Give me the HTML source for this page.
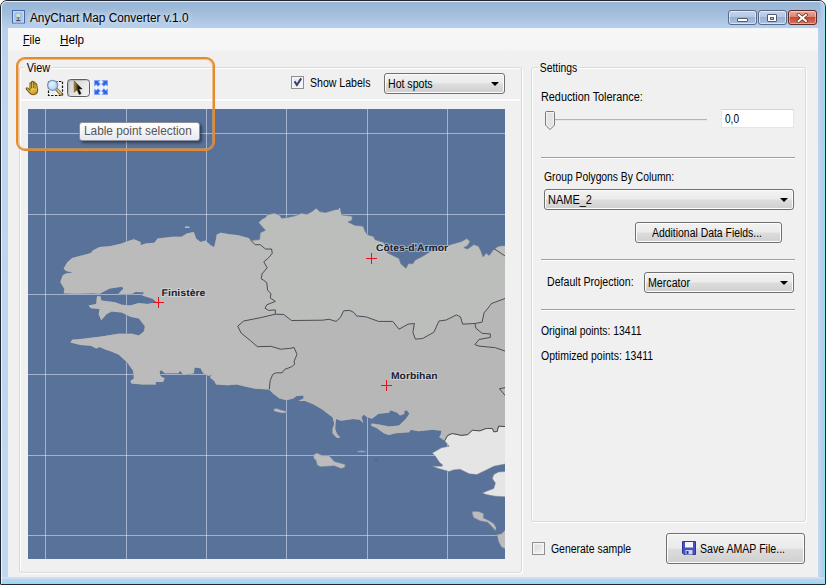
<!DOCTYPE html>
<html><head><meta charset="utf-8">
<style>
html,body{margin:0;padding:0;}
body{width:826px;height:585px;position:relative;overflow:hidden;background:#fff;font-family:"Liberation Sans",sans-serif;font-size:12px;color:#000;}
.abs{position:absolute;}
.t{position:absolute;white-space:nowrap;line-height:14px;height:14px;}
#win{position:absolute;left:0;top:0;width:824px;height:583px;border:1px solid #23262c;border-radius:7px 7px 1px 1px;
 background:linear-gradient(to top,#8edff4 0px,#9bdcf2 2px,#bccfee 3px,#c1d1ef 5px,#d4ecf6 6px,rgba(200,220,245,0) 7px) no-repeat,
 linear-gradient(to left,#93dff2 0px,#a9d3ee 1px,#b6cbe8 2px,rgba(182,203,232,0) 6px) no-repeat,
 linear-gradient(#97b4d4 0px,#a1bddc 12px,#b8d0eb 27px,#bdd4ef 60px,#c2d8f1 100%);}
#win:before{content:"";position:absolute;left:0;top:0;right:0;bottom:0;border:1px solid rgba(255,255,255,.75);border-right-color:rgba(150,225,245,.9);border-bottom-color:transparent;border-radius:6px 6px 1px 1px;}
#client{position:absolute;left:8px;top:28px;width:810px;height:549px;background:#f0f0f0;}
#menubar{position:absolute;left:0;top:0;width:810px;height:24px;background:linear-gradient(#eef6fd 0px,#faf9f7 2px,#f6f6f6 5px,#f6f6f6 20px,#f1f1f1 24px);}
.gb{position:absolute;border:1px solid #dbdbdb;border-radius:3px;box-shadow:inset 1px 1px 0 #fff,1px 1px 0 #fff;}
.gbl{position:absolute;background:#f0f0f0;padding:0 2px;line-height:14px;}
.sep{position:absolute;height:1px;background:#a0a0a0;border-bottom:1px solid #fff;}
.combo{position:absolute;border:1px solid #707070;border-radius:3px;background:linear-gradient(#f2f2f2 0%,#ebebeb 48%,#dddddd 52%,#cfcfcf 100%);box-shadow:inset 0 0 0 1px #fcfcfc;}
.combo .arr{position:absolute;right:5px;top:8px;width:0;height:0;border-left:4px solid transparent;border-right:4px solid transparent;border-top:4px solid #000;}
.btn{position:absolute;border:1px solid #707070;border-radius:3px;background:linear-gradient(#f2f2f2 0%,#ebebeb 48%,#dddddd 52%,#cfcfcf 100%);box-shadow:inset 0 0 0 1px #fcfcfc;}
.chk{position:absolute;width:11px;height:11px;border:1px solid #8e8f8f;background:linear-gradient(135deg,#d5d5d5,#f6f6f6);box-shadow:inset 0 0 0 1.5px #f6f6f6;}

.cb{position:absolute;top:10px;height:13px;border:1px solid #5a6a86;border-radius:3px;background:linear-gradient(#c3d4ec 0%,#b4c8e4 45%,#98b2d6 50%,#aac2e2 100%);box-shadow:inset 0 0 0 1px rgba(255,255,255,.55);}
.cb.red{border-color:#5b2a2a;background:linear-gradient(#e9a99d 0%,#dd8472 45%,#c94a34 50%,#d9745a 100%);box-shadow:inset 0 0 0 1px rgba(255,255,255,.4);}
</style></head><body>
<div id="win">
 <!-- title -->
 <div class="t" id="title" style="text-shadow:0 0 5px rgba(255,255,255,.9),0 0 8px rgba(255,255,255,.6);margin-top:1px;left:29.2px;top:9px;font-size:12px;transform:scaleX(0.983);transform-origin:0 0;">AnyChart Map Converter v.1.0</div>
</div>
<div id="client">
 <div id="menubar"></div>
</div>
<!-- all following positioned in page coords -->
<div class="t" id="mFile" style="left:22.8px;top:33px;transform:scaleX(0.899);transform-origin:0 0;"><u>F</u>ile</div>
<div class="t" id="mHelp" style="left:59.7px;top:33px;transform:scaleX(0.972);transform-origin:0 0;"><u>H</u>elp</div>

<!-- View groupbox -->
<div class="gb" style="left:19px;top:67px;width:501px;height:504px;"></div>
<div class="gbl" id="gView" style="left:24.5px;top:61px;transform:scaleX(0.899);transform-origin:0 0;">View</div>
<div class="abs" style="left:20px;top:99px;width:500px;height:2px;background:#fcfcfc;"></div>

<!-- Settings groupbox -->
<div class="gb" style="left:531px;top:67px;width:273px;height:453px;"></div>
<div class="gbl" id="gSet" style="left:538.1px;top:61px;transform:scaleX(0.865);transform-origin:0 0;">Settings</div>

<!-- map -->
<div id="map" class="abs" style="left:28px;top:109px;width:477px;height:450px;background:#58729a;overflow:hidden;">
<svg id="mapsvg" width="477" height="450" viewBox="28 109 477 450" style="position:absolute;left:0;top:0;">
<path d="M45.5 109V559M126.5 109V559M206.5 109V559M286.5 109V559M367.5 109V559M447.5 109V559" stroke="#eef3ff" stroke-opacity=".5" stroke-width="1" fill="none" shape-rendering="crispEdges"/>
<path d="M28 133.5H505M28 214.5H505M28 294.5H505M28 374.5H505M28 455.5H505M28 535.5H505" stroke="#eef3ff" stroke-opacity=".5" stroke-width="1" fill="none" shape-rendering="crispEdges"/>
<clipPath id="lc"><path d="M60.3 282.0 L62.8 275.2 L66.0 273.5 L73.0 272.5 L66.0 271.0 L63.7 268.4 L67.1 262.4 L72.2 258.1 L91.0 253.0 L92.7 250.4 L99.6 247.0 L109.8 246.2 L121.8 243.6 L125.2 241.9 L133.8 239.3 L140.6 241.9 L140.6 245.3 L145.7 243.6 L154.3 242.7 L157.7 238.5 L173.0 236.8 L181.6 236.8 L186.8 233.6 L193.7 231.9 L196.2 238.7 L200.5 242.1 L205.6 240.4 L209.9 244.7 L214.2 247.3 L215.9 239.6 L216.8 234.4 L221.0 232.7 L227.9 234.1 L238.1 235.3 L248.4 237.9 L250.9 240.4 L259.5 239.6 L260.3 232.7 L265.5 230.2 L262.1 226.8 L258.6 222.5 L262.1 219.1 L265.5 217.4 L267.2 214.8 L274.0 213.1 L279.1 214.8 L281.7 218.2 L287.7 217.4 L296.2 215.6 L301.4 213.1 L306.8 214.2 L312.0 211.6 L316.2 208.2 L319.7 211.6 L325.6 212.5 L334.2 209.9 L340.2 209.1 L341.9 215.0 L352.1 216.2 L352.1 220.2 L347.9 221.9 L354.7 225.3 L363.2 226.2 L365.0 231.3 L367.5 234.7 L373.5 236.4 L375.2 239.8 L383.8 242.4 L387.2 252.6 L392.3 255.2 L399.1 258.6 L400.9 263.8 L406.0 268.3 L408.5 263.4 L412.8 263.8 L415.0 260.2 L423.1 256.0 L430.4 251.6 L440.0 250.5 L450.8 244.6 L461.5 241.5 L466.9 238.5 L470.0 241.5 L467.7 245.4 L463.8 247.7 L467.7 248.9 L473.8 244.6 L478.5 246.2 L480.8 250.8 L483.1 256.9 L486.2 253.1 L489.2 255.4 L493.8 249.2 L498.5 246.2 L506.0 245.4 L506.0 426.6 L498.5 426.2 L497.2 431.5 L493.8 431.8 L492.3 428.5 L486.2 428.5 L480.0 430.8 L472.3 430.3 L467.7 434.6 L461.5 435.4 L452.3 433.5 L447.7 435.4 L444.6 440.8 L439.2 436.9 L440.8 434.6 L441.5 430.8 L432.3 429.7 L418.5 431.2 L410.8 429.7 L409.2 432.3 L406.0 432.5 L395.7 433.3 L388.9 435.0 L383.8 433.3 L376.9 428.2 L370.9 425.6 L371.8 423.6 L380.3 424.8 L388.9 426.5 L399.1 425.6 L406.0 418.8 L409.4 413.7 L406.8 410.3 L404.3 411.1 L404.3 413.7 L400.0 415.4 L397.4 412.8 L390.6 410.3 L388.9 412.8 L378.6 413.7 L371.8 418.8 L366.7 417.1 L364.1 414.5 L361.5 417.1 L363.3 423.2 L359.9 419.8 L353.1 419.0 L341.1 420.7 L336.0 419.0 L335.1 428.4 L336.8 433.5 L340.3 437.8 L336.8 437.8 L332.6 433.5 L332.6 428.4 L334.3 424.1 L332.6 417.3 L329.1 414.7 L322.3 409.6 L313.8 404.4 L305.2 401.0 L298.4 401.0 L303.5 398.5 L303.5 395.4 L296.7 395.9 L293.2 398.5 L286.4 400.2 L279.6 398.5 L272.7 393.3 L269.3 389.4 L255.6 388.7 L247.1 387.0 L236.8 384.5 L228.0 385.3 L216.0 384.4 L214.3 381.0 L210.0 377.6 L211.7 374.2 L209.1 375.9 L203.2 373.3 L200.6 368.2 L194.6 367.4 L193.8 373.3 L183.5 375.0 L180.1 370.8 L178.4 373.3 L169.0 373.3 L164.7 373.3 L161.3 369.9 L159.6 371.6 L160.4 375.9 L164.7 378.5 L163.0 381.9 L155.3 381.9 L156.2 384.4 L142.5 384.4 L131.4 383.6 L130.5 381.0 L133.9 378.5 L133.1 370.8 L127.1 362.2 L118.5 354.5 L110.0 351.1 L106.4 350.0 L99.6 347.0 L96.2 348.4 L91.0 345.8 L80.8 345.0 L70.5 342.4 L72.2 339.8 L80.8 339.0 L101.3 336.4 L118.4 333.8 L132.0 333.8 L138.9 335.6 L144.0 331.3 L144.9 326.2 L138.9 318.5 L130.3 316.8 L121.8 312.5 L111.5 311.6 L106.4 314.2 L101.3 320.2 L98.7 314.2 L99.6 309.0 L91.0 308.2 L88.5 305.6 L96.2 303.9 L97.0 296.2 L100.4 296.2 L101.3 300.5 L115.0 302.2 L121.8 304.8 L130.3 305.6 L138.9 303.1 L147.4 303.9 L156.8 302.2 L152.6 298.8 L142.3 295.4 L144.0 292.3 L135.5 292.0 L130.3 294.5 L118.4 293.7 L123.5 288.5 L121.8 286.8 L109.8 288.5 L99.6 293.7 L92.7 293.2 L75.6 293.7 L63.7 293.2 L64.5 288.9Z"/></clipPath>
<path d="M60.3 282.0 L62.8 275.2 L66.0 273.5 L73.0 272.5 L66.0 271.0 L63.7 268.4 L67.1 262.4 L72.2 258.1 L91.0 253.0 L92.7 250.4 L99.6 247.0 L109.8 246.2 L121.8 243.6 L125.2 241.9 L133.8 239.3 L140.6 241.9 L140.6 245.3 L145.7 243.6 L154.3 242.7 L157.7 238.5 L173.0 236.8 L181.6 236.8 L186.8 233.6 L193.7 231.9 L196.2 238.7 L200.5 242.1 L205.6 240.4 L209.9 244.7 L214.2 247.3 L215.9 239.6 L216.8 234.4 L221.0 232.7 L227.9 234.1 L238.1 235.3 L248.4 237.9 L250.9 240.4 L259.5 239.6 L260.3 232.7 L265.5 230.2 L262.1 226.8 L258.6 222.5 L262.1 219.1 L265.5 217.4 L267.2 214.8 L274.0 213.1 L279.1 214.8 L281.7 218.2 L287.7 217.4 L296.2 215.6 L301.4 213.1 L306.8 214.2 L312.0 211.6 L316.2 208.2 L319.7 211.6 L325.6 212.5 L334.2 209.9 L340.2 209.1 L341.9 215.0 L352.1 216.2 L352.1 220.2 L347.9 221.9 L354.7 225.3 L363.2 226.2 L365.0 231.3 L367.5 234.7 L373.5 236.4 L375.2 239.8 L383.8 242.4 L387.2 252.6 L392.3 255.2 L399.1 258.6 L400.9 263.8 L406.0 268.3 L408.5 263.4 L412.8 263.8 L415.0 260.2 L423.1 256.0 L430.4 251.6 L440.0 250.5 L450.8 244.6 L461.5 241.5 L466.9 238.5 L470.0 241.5 L467.7 245.4 L463.8 247.7 L467.7 248.9 L473.8 244.6 L478.5 246.2 L480.8 250.8 L483.1 256.9 L486.2 253.1 L489.2 255.4 L493.8 249.2 L498.5 246.2 L506.0 245.4 L506.0 426.6 L498.5 426.2 L497.2 431.5 L493.8 431.8 L492.3 428.5 L486.2 428.5 L480.0 430.8 L472.3 430.3 L467.7 434.6 L461.5 435.4 L452.3 433.5 L447.7 435.4 L444.6 440.8 L439.2 436.9 L440.8 434.6 L441.5 430.8 L432.3 429.7 L418.5 431.2 L410.8 429.7 L409.2 432.3 L406.0 432.5 L395.7 433.3 L388.9 435.0 L383.8 433.3 L376.9 428.2 L370.9 425.6 L371.8 423.6 L380.3 424.8 L388.9 426.5 L399.1 425.6 L406.0 418.8 L409.4 413.7 L406.8 410.3 L404.3 411.1 L404.3 413.7 L400.0 415.4 L397.4 412.8 L390.6 410.3 L388.9 412.8 L378.6 413.7 L371.8 418.8 L366.7 417.1 L364.1 414.5 L361.5 417.1 L363.3 423.2 L359.9 419.8 L353.1 419.0 L341.1 420.7 L336.0 419.0 L335.1 428.4 L336.8 433.5 L340.3 437.8 L336.8 437.8 L332.6 433.5 L332.6 428.4 L334.3 424.1 L332.6 417.3 L329.1 414.7 L322.3 409.6 L313.8 404.4 L305.2 401.0 L298.4 401.0 L303.5 398.5 L303.5 395.4 L296.7 395.9 L293.2 398.5 L286.4 400.2 L279.6 398.5 L272.7 393.3 L269.3 389.4 L255.6 388.7 L247.1 387.0 L236.8 384.5 L228.0 385.3 L216.0 384.4 L214.3 381.0 L210.0 377.6 L211.7 374.2 L209.1 375.9 L203.2 373.3 L200.6 368.2 L194.6 367.4 L193.8 373.3 L183.5 375.0 L180.1 370.8 L178.4 373.3 L169.0 373.3 L164.7 373.3 L161.3 369.9 L159.6 371.6 L160.4 375.9 L164.7 378.5 L163.0 381.9 L155.3 381.9 L156.2 384.4 L142.5 384.4 L131.4 383.6 L130.5 381.0 L133.9 378.5 L133.1 370.8 L127.1 362.2 L118.5 354.5 L110.0 351.1 L106.4 350.0 L99.6 347.0 L96.2 348.4 L91.0 345.8 L80.8 345.0 L70.5 342.4 L72.2 339.8 L80.8 339.0 L101.3 336.4 L118.4 333.8 L132.0 333.8 L138.9 335.6 L144.0 331.3 L144.9 326.2 L138.9 318.5 L130.3 316.8 L121.8 312.5 L111.5 311.6 L106.4 314.2 L101.3 320.2 L98.7 314.2 L99.6 309.0 L91.0 308.2 L88.5 305.6 L96.2 303.9 L97.0 296.2 L100.4 296.2 L101.3 300.5 L115.0 302.2 L121.8 304.8 L130.3 305.6 L138.9 303.1 L147.4 303.9 L156.8 302.2 L152.6 298.8 L142.3 295.4 L144.0 292.3 L135.5 292.0 L130.3 294.5 L118.4 293.7 L123.5 288.5 L121.8 286.8 L109.8 288.5 L99.6 293.7 L92.7 293.2 L75.6 293.7 L63.7 293.2 L64.5 288.9Z" fill="#bcbebc" stroke="#6a7890" stroke-width="0.6"/>
<g clip-path="url(#lc)"><path d="M250.9 240.4 L255.2 244.7 L260.3 244.7 L265.5 249.0 L271.5 249.0 L272.3 253.2 L268.9 257.5 L263.8 261.8 L267.2 267.8 L262.1 273.8 L261.2 278.9 L263.3 280.0 L266.8 282.6 L267.6 290.3 L271.0 293.7 L270.2 297.9 L275.3 301.4 L266.8 304.8 L265.0 308.2 L268.5 310.4 L275.3 309.9 L275.3 314.2 L260.8 317.6 L243.7 321.0 L237.7 326.2 L241.1 333.0 L250.5 340.7 L257.4 346.7 L271.0 346.3 L280.4 349.2 L289.8 348.4 L294.1 347.5 L297.0 354.4 L294.1 361.2 L294.6 364.3 L291.5 366.8 L284.7 369.4 L282.1 372.8 L276.2 372.8 L272.7 374.5 L270.2 380.5 L269.3 389.0 L269.3 560.0 L28.0 560.0 L28.0 109.0 L250.9 109.0Z" fill="#babbba"/><path d="M269.3 389.0 L270.2 380.5 L272.7 374.5 L276.2 372.8 L282.1 372.8 L284.7 369.4 L291.5 366.8 L294.6 364.3 L294.1 361.2 L297.0 354.4 L294.1 347.5 L289.8 348.4 L280.4 349.2 L271.0 346.3 L257.4 346.7 L250.5 340.7 L241.1 333.0 L237.7 326.2 L243.7 321.0 L260.8 317.6 L275.3 314.2 L283.8 314.5 L291.5 320.5 L322.3 320.2 L329.1 319.3 L336.0 321.4 L340.3 317.6 L343.7 310.8 L349.7 310.4 L353.9 312.5 L356.5 315.9 L360.0 316.3 L366.2 316.9 L378.5 321.4 L392.8 321.4 L399.0 329.2 L408.2 324.1 L414.4 323.5 L412.9 332.3 L415.4 339.1 L422.6 338.5 L433.8 332.3 L439.0 321.0 L446.2 320.0 L456.4 314.9 L460.5 316.9 L462.6 324.1 L474.9 323.5 L482.1 322.1 L484.1 312.8 L489.2 306.7 L491.3 303.6 L506.0 298.1 L506.0 560.0 L269.3 560.0Z" fill="#b7b7b7"/></g>
<path d="M444.6 440.8 L447.7 435.4 L452.3 433.5 L461.5 435.4 L467.7 434.6 L472.3 430.3 L480.0 430.8 L486.2 428.5 L492.3 428.5 L493.8 431.8 L497.2 431.5 L498.5 426.2 L506.0 426.6 L506.0 463.8 L493.8 466.2 L486.2 470.0 L476.9 474.6 L469.2 473.8 L464.6 471.5 L460.0 469.2 L453.1 470.0 L449.2 471.5 L438.5 468.5 L432.3 466.2 L442.3 466.2 L442.3 464.6 L440.0 463.1 L435.4 456.2 L432.3 453.1 L441.5 447.7 L449.2 446.2Z" fill="#e5e5e5" stroke="#7a8190" stroke-width="0.5"/>
<path d="M506.0 471.5 L498.5 472.0 L493.8 474.6 L492.3 478.5 L495.4 483.1 L493.8 488.5 L487.7 490.8 L482.3 493.1 L486.2 494.6 L495.4 496.2 L506.0 496.9Z" fill="#e5e5e5" stroke="#7a8190" stroke-width="0.5"/>
<path d="M472.3 511.5 L478.5 511.5 L483.8 513.8 L483.1 517.7 L489.2 520.8 L493.8 523.8 L496.2 527.7 L495.4 530.8 L492.3 526.9 L487.7 522.3 L480.0 520.8 L473.8 517.7 L472.3 513.8Z" fill="#bbbcbb" stroke="#7a869c" stroke-width="0.5"/>
<path d="M506.0 529.2 L501.5 533.8 L497.2 534.6 L498.5 541.5 L501.5 546.9 L506.0 549.2Z" fill="#bbbcbb" stroke="#7a869c" stroke-width="0.5"/>
<path d="M313.7 454.7 L317.1 453.0 L322.2 455.6 L329.0 455.6 L334.2 461.5 L345.3 464.6 L344.4 467.5 L341.0 468.4 L334.2 465.8 L320.5 466.7 L317.1 465.0 L316.2 460.7 L313.7 458.1Z" fill="#bbbcbb" stroke="#7a869c" stroke-width="0.5"/>
<path d="M273.6 409.0 L277.0 408.6 L281.0 410.0 L286.4 411.3 L286.8 412.8 L282.0 413.0 L277.0 412.0 L274.0 411.0Z" fill="#bbbcbb" stroke="#7a869c" stroke-width="0.5"/>
<path d="M185 227.2h4.5" stroke="#b8c2d4" stroke-width="1.4"/>
<path d="M357.5 451.6h8" stroke="#8f9aad" stroke-width="1.6"/><path d="M359.5 451.2h4" stroke="#a4abb8" stroke-width="0.8"/>
<path d="M374.5 459.6h3.5" stroke="#4f6690" stroke-width="1.6"/>
<path d="M339.5 208v3" stroke="#b8c2d4" stroke-width="1.2"/>
<path d="M250.9 240.4 L255.2 244.7 L260.3 244.7 L265.5 249.0 L271.5 249.0 L272.3 253.2 L268.9 257.5 L263.8 261.8 L267.2 267.8 L262.1 273.8 L261.2 278.9 L263.3 280.0 L266.8 282.6 L267.6 290.3 L271.0 293.7 L270.2 297.9 L275.3 301.4 L266.8 304.8 L265.0 308.2 L268.5 310.4 L275.3 309.9 L275.3 314.2 M275.3 314.2 L283.8 314.5 L291.5 320.5 L322.3 320.2 L329.1 319.3 L336.0 321.4 L340.3 317.6 L343.7 310.8 L349.7 310.4 L353.9 312.5 L356.5 315.9 L360.0 316.3 L366.2 316.9 L378.5 321.4 L392.8 321.4 L399.0 329.2 L408.2 324.1 L414.4 323.5 L412.9 332.3 L415.4 339.1 L422.6 338.5 L433.8 332.3 L439.0 321.0 L446.2 320.0 L456.4 314.9 L460.5 316.9 L462.6 324.1 L474.9 323.5 L482.1 322.1 L484.1 312.8 L489.2 306.7 L491.3 303.6 L506.0 298.1 M275.3 314.2 L260.8 317.6 L243.7 321.0 L237.7 326.2 L241.1 333.0 L250.5 340.7 L257.4 346.7 L271.0 346.3 L280.4 349.2 L289.8 348.4 L294.1 347.5 L297.0 354.4 L294.1 361.2 L294.6 364.3 L291.5 366.8 L284.7 369.4 L282.1 372.8 L276.2 372.8 L272.7 374.5 L270.2 380.5 L269.3 389.0 M474.9 323.5 L475.9 328.2 L482.1 333.3 L490.3 333.9 L490.3 337.4 L479.0 339.5 L474.9 344.6 L479.0 346.1 L495.4 347.7 L506.0 351.4 M493.8 248.5 L506.0 256.6 M506.0 387.5 L499.5 388.7 L506.0 396.5" fill="none" stroke="#4b4d52" stroke-width="1" stroke-linejoin="round"/>
<path d="M506.0 426.6 L498.5 426.2 L497.2 431.5 L493.8 431.8 L492.3 428.5 L486.2 428.5 L480.0 430.8 L472.3 430.3 L467.7 434.6 L461.5 435.4 L452.3 433.5 L447.7 435.4 L444.6 440.8" fill="none" stroke="#4b4d52" stroke-width="1"/>
<path d="M153.0 302.5h11M158.5 297.0v11" stroke="#e8101c" stroke-width="1" shape-rendering="crispEdges"/>
<path d="M366.0 258.5h11M371.5 253.0v11" stroke="#e8101c" stroke-width="1" shape-rendering="crispEdges"/>
<path d="M381.0 385.5h11M386.5 380.0v11" stroke="#e8101c" stroke-width="1" shape-rendering="crispEdges"/>
<text text-rendering="geometricPrecision" x="161.5" y="296.0" textLength="44.0" lengthAdjust="spacingAndGlyphs" font-family="Liberation Sans" font-weight="bold" font-size="9.7" fill="#1d2231" stroke="#dfe0e2" stroke-opacity=".55" stroke-width="2" paint-order="stroke">Finistère</text>
<text text-rendering="geometricPrecision" x="376.0" y="251.0" textLength="72.0" lengthAdjust="spacingAndGlyphs" font-family="Liberation Sans" font-weight="bold" font-size="9.7" fill="#1d2231" stroke="#dfe0e2" stroke-opacity=".55" stroke-width="2" paint-order="stroke">Côtes-d'Armor</text>
<text text-rendering="geometricPrecision" x="391.0" y="379.0" textLength="46.5" lengthAdjust="spacingAndGlyphs" font-family="Liberation Sans" font-weight="bold" font-size="9.7" fill="#1d2231" stroke="#dfe0e2" stroke-opacity=".55" stroke-width="2" paint-order="stroke">Morbihan</text>
</svg>
</div>

<!-- title bar icon -->
<svg class="abs" style="left:12px;top:10px" width="13" height="14" viewBox="0 0 13 14">
 <rect x="0.5" y="0.5" width="12" height="12.5" fill="#a9c6ee" stroke="#4668a8"/>
 <rect x="1.5" y="1.5" width="10" height="10.5" fill="none" stroke="#c6dbf6" stroke-width="1"/>
 <circle cx="6.3" cy="5.6" r="2.6" fill="#cfe6c9"/><circle cx="6.3" cy="5.6" r="2.6" fill="none" stroke="#7fa0b4" stroke-width=".6"/>
 <path d="M4.6 7.2Q6.3 9.6 8 7.2Z" fill="#8a6a2a"/><path d="M6.3 8.2v2" stroke="#5b5b63" stroke-width="1"/><path d="M4.2 10.6h4.2" stroke="#4a4f66" stroke-width="1.2"/>
</svg>
<!-- caption buttons -->
<div class="cb" style="left:728px;width:27px;"><div class="abs" style="left:8px;top:7px;width:9px;height:2px;background:#fff;border:1px solid #535966;border-radius:1px;"></div></div>
<div class="cb" style="left:758px;width:27px;"><div class="abs" style="left:8px;top:3px;width:8px;height:6px;border:1px solid #535966;background:#fff;border-radius:1px;"><div class="abs" style="left:2px;top:2px;width:2px;height:1px;border:1px solid #535966;background:#b9cbe3"></div></div></div>
<div class="cb red" style="left:788px;width:27px;">
 <svg class="abs" style="left:7px;top:2px" width="13" height="10" viewBox="0 0 13 10"><path d="M2.6 1.8L10 8M10 1.8L2.6 8" stroke="#5a2a25" stroke-width="3.4" stroke-linecap="square"/><path d="M2.6 1.8L10 8M10 1.8L2.6 8" stroke="#fff" stroke-width="2" stroke-linecap="square"/></svg>
</div>

<!-- toolbar icons -->
<!-- hand -->
<svg class="abs" style="left:25px;top:80px" width="16" height="16" viewBox="0 0 16 16">
 <defs><linearGradient id="hg" x1="0" y1="0" x2="0.3" y2="1"><stop offset="0" stop-color="#fdf0a0"/><stop offset=".55" stop-color="#f6d964"/><stop offset="1" stop-color="#cf9c2c"/></linearGradient></defs>
 <path d="M6.2 14.3C4.6 13 2.6 10.6 1.4 9.2C0.8 8.2 1.9 7.4 2.8 8.2L5 10.2V3.6C5 2.4 6.6 2.4 6.6 3.6V2.2C6.6 1 8.3 1 8.3 2.2V2.9C8.3 1.8 10 1.8 10 2.9V4.2C10 3.1 11.7 3.2 11.7 4.3C11.9 6.4 12.6 8.2 12.7 10.2C12.7 12.4 11.4 13.8 10.4 14.3C9 14.8 7.4 14.8 6.2 14.3Z" fill="url(#hg)" stroke="#7d5c14" stroke-width="1.1" stroke-linejoin="round"/>
 <path d="M6.6 3.6v4.8M8.3 2.9v5.2M10 4.2v4.4" stroke="#7d5c14" stroke-width="1"/>
</svg>
<!-- zoom -->
<svg class="abs" style="left:46px;top:79px" width="18" height="18" viewBox="0 0 18 18">
 <defs><radialGradient id="lg" cx=".4" cy=".35" r=".7"><stop offset="0" stop-color="#e2f6fd"/><stop offset=".7" stop-color="#bcdcf4"/><stop offset="1" stop-color="#a6c0e6"/></radialGradient></defs>
 <rect x="2.5" y="2.5" width="14" height="14" fill="none" stroke="#111" stroke-width="1.2" stroke-dasharray="2.4 1.4" stroke-dashoffset="1"/>
 <path d="M10.4 10.2L15 15.2" stroke="#8d6f2a" stroke-width="3.2" stroke-linecap="round"/>
 <path d="M10.8 10.4L15 15" stroke="#ecd58c" stroke-width="1.2" stroke-linecap="round"/>
 <circle cx="6.6" cy="6.3" r="5" fill="url(#lg)" stroke="#7e94c2" stroke-width="1.3"/>
</svg>
<!-- arrow (checked) -->
<div class="abs" style="left:67px;top:79px;width:21px;height:16px;border:1px solid #5b5d60;border-radius:3.5px;background:linear-gradient(120deg,#d0d1d3,#eeeeee 80%);box-shadow:inset 1px 1px 1px rgba(0,0,0,.15),0 0 0 1px rgba(255,255,255,.6);"></div>
<svg class="abs" style="left:72px;top:80px" width="12" height="16" viewBox="0 0 12 16">
 <defs><linearGradient id="ag" x1="0" y1="0" x2="1" y2="0"><stop offset="0" stop-color="#b89438"/><stop offset=".45" stop-color="#3a2c08"/><stop offset=".6" stop-color="#000"/></linearGradient></defs>
 <path d="M2.2 0.9V12.2L4.9 9.7L7.2 14.6L9.2 13.7L7 9H10.2Z" fill="url(#ag)" stroke="#4a3a10" stroke-width=".5" stroke-linejoin="round"/>
</svg>
<!-- fullscreen -->
<svg class="abs" style="left:94px;top:80px" width="14" height="15" viewBox="0 0 14 15">
 <rect x="0" y="0" width="14" height="15" fill="#eaf2ff"/>
 <g fill="#3365e4" stroke="#7ea4f6" stroke-width=".7">
 <path d="M0.4 0.4h5.6l-1.6 1.7 1.9 1.9-2.2 2.3L2.1 4.4 0.4 6z"/>
 <path d="M13.6 0.4v5.6l-1.7-1.6-1.9 1.9-2.3-2.2L9.6 2.1 8 0.4z"/>
 <path d="M0.4 14.6v-5.6l1.7 1.6 1.9-1.9 2.3 2.2L4.4 12.9 6 14.6z"/>
 <path d="M13.6 14.6h-5.6l1.6-1.7-1.9-1.9 2.2-2.3 1.9 1.9 1.8-1.6z"/>
 </g>
</svg>

<!-- show labels -->
<div class="chk" style="left:291px;top:76px;background:linear-gradient(135deg,#dfe3ee,#f7f8fc);"></div>
<svg class="abs" style="left:293px;top:77px" width="10" height="10" viewBox="0 0 10 10"><path d="M1.6 4.4L3.9 8L8.2 1.4" fill="none" stroke="#363f6e" stroke-width="2"/></svg>
<div class="t" id="tShow" style="left:309.8px;top:76px;transform:scaleX(0.880);transform-origin:0 0;">Show Labels</div>
<div class="combo" style="left:384px;top:73px;width:119px;height:19px;"><div class="arr"></div></div>
<div class="t" id="tHot" style="left:387.9px;top:77px;transform:scaleX(0.880);transform-origin:0 0;">Hot spots</div>

<!-- settings content -->
<div class="t" id="tRed" style="left:541.0px;top:90px;transform:scaleX(0.904);transform-origin:0 0;">Reduction Tolerance:</div>
<div class="abs" style="left:546px;top:119px;width:161px;height:1px;background:#b4b4b4;border-bottom:1px solid #e8e8e8;"></div>
<svg class="abs" style="left:545px;top:111px" width="11" height="20" viewBox="0 0 11 20"><path d="M1.5 0.5h7a1 1 0 0 1 1 1V14L5 18.6 0.5 14V1.5a1 1 0 0 1 1-1z" fill="#e3e3e3" stroke="#7b7b7b"/><path d="M2 1.5h6.5V13.6L5 17 1.6 13.6z" fill="none" stroke="#fafafa" stroke-width=".8"/></svg>
<div class="abs" style="left:721px;top:109px;width:71px;height:17px;border:1px solid #e2e5ec;border-top-color:#cfd3dc;background:#fff;"></div>
<div class="t" id="t00" style="left:724.5px;top:112px;transform:scaleX(0.839);transform-origin:0 0;">0,0</div>
<div class="sep" style="left:541px;top:157px;width:254px;"></div>
<div class="t" id="tGrp" style="left:543.9px;top:170px;transform:scaleX(0.860);transform-origin:0 0;">Group Polygons By Column:</div>
<div class="combo" style="left:544px;top:189px;width:248px;height:19px;"><div class="arr"></div></div>
<div class="t" id="tName" style="left:547.5px;top:193px;transform:scaleX(0.916);transform-origin:0 0;">NAME_2</div>
<div class="btn" style="left:635px;top:222px;width:145px;height:19px;"></div>
<div class="t" id="tAdd" style="left:651.5px;top:226px;transform:scaleX(0.868);transform-origin:0 0;">Additional Data Fields...</div>
<div class="sep" style="left:541px;top:259px;width:254px;"></div>
<div class="t" id="tProj" style="left:547.0px;top:275px;transform:scaleX(0.883);transform-origin:0 0;">Default Projection:</div>
<div class="combo" style="left:644px;top:272px;width:148px;height:19px;"><div class="arr"></div></div>
<div class="t" id="tMerc" style="left:647.5px;top:276px;transform:scaleX(0.887);transform-origin:0 0;">Mercator</div>
<div class="sep" style="left:541px;top:309px;width:254px;"></div>
<div class="t" id="tOrig" style="left:541.1px;top:324px;transform:scaleX(0.867);transform-origin:0 0;">Original points: 13411</div>
<div class="t" id="tOpt" style="left:541.1px;top:349px;transform:scaleX(0.872);transform-origin:0 0;">Optimized points: 13411</div>

<!-- bottom -->
<div class="chk" style="left:532px;top:542px;"></div>
<div class="t" id="tGen" style="left:550.8px;top:542px;transform:scaleX(0.870);transform-origin:0 0;">Generate sample</div>
<div class="btn" style="left:666px;top:533px;width:137px;height:29px;"></div>
<svg class="abs" style="left:682px;top:541px" width="14" height="14" viewBox="0 0 14 14">
 <path d="M0.5 0.5h13v13H2l-1.5-1.5z" fill="#4450c4" stroke="#2c3698" />
 <rect x="3" y="1" width="8" height="5.5" fill="#f4f6ff"/><rect x="3.5" y="9" width="7" height="4.5" fill="#cfd3e6"/><rect x="4.5" y="10" width="2" height="3" fill="#2c3698"/>
</svg>
<div class="t" id="tSave" style="left:699.5px;top:542px;transform:scaleX(0.881);transform-origin:0 0;">Save AMAP File...</div>

<!-- orange callout + tooltip -->
<div class="abs" style="left:16px;top:57px;width:195.3px;height:90.2px;border:2.1px solid #e68a2c;border-radius:9px;box-shadow:inset 0 0 0 1px rgba(236,160,80,.6);"></div>
<div class="abs" style="left:79px;top:122px;width:119px;height:16.5px;border:1px solid #8d909a;border-radius:3px;background:linear-gradient(#ffffff,#e6e9f2);box-shadow:2px 2px 3px rgba(0,0,0,.45);"></div>
<div class="t" id="tTip" style="left:84.0px;top:124px;color:#555;transform:scaleX(0.985);transform-origin:0 0;">Lable point selection</div>
</body></html>
